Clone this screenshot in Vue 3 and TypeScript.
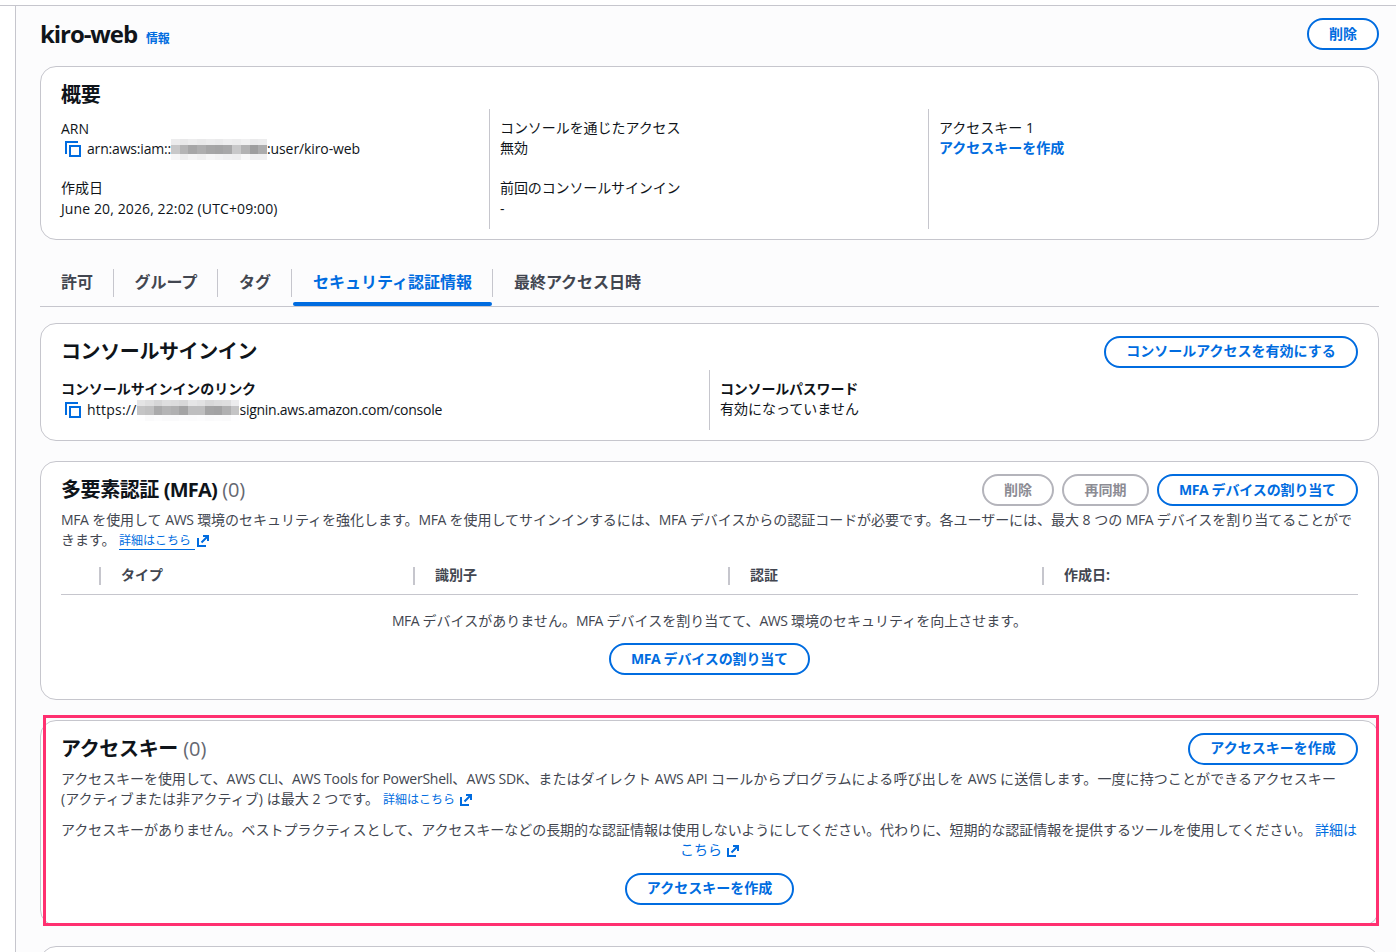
<script setup lang="ts">
import type { Directive } from 'vue'

interface Tab {
  label: string
  size: string
  active?: boolean
}

const tabs: Tab[] = [
  { label: '許可', size: 'w74' },
  { label: 'グループ', size: 'w104' },
  { label: 'タグ', size: 'w74' },
  { label: 'セキュリティ認証情報', size: 'w201', active: true },
  { label: '最終アクセス日時', size: 'w169' },
]

const columns: string[] = ['', 'タイプ', '識別子', '認証', '作成日:']

// Grey levels of the redaction blocks, one array per row.
const accountMask: number[][] = [
  [236, 232, 236, 233, 236, 234, 238, 236, 240, 234, 236],
  [200, 180, 166, 174, 166, 164, 168, 200, 178, 158, 172],
  [246, 238, 244, 240, 246, 243, 240, 238, 248, 240, 240],
]
const hostMask: number[][] = [
  [228, 222, 214, 222, 220, 216, 230, 226, 216, 220, 222, 236],
  [196, 192, 170, 180, 176, 164, 190, 190, 164, 162, 176, 196],
  [254, 250, 252, 250, 250, 252, 251, 252, 250, 251, 250, 254],
]

const grey = (v: number): string => `rgb(${v}, ${v}, ${v + 1})`

// Tracks a single line of text so that it spans the given width.
const vFit: Directive<HTMLElement, number> = {
  mounted(el, binding) {
    el.style.setProperty('--track', '0px')
    const natural = el.getBoundingClientRect().width
    const count = Array.from(el.textContent ?? '').length
    el.style.setProperty('--track', `${((binding.value - natural) / count).toFixed(4)}px`)
  },
}
</script>

<template>
  <div class="page">
    <div class="topbar"></div>
    <div class="body">
      <div class="rail"></div>
      <main class="main">
        <header class="page-head">
          <h1><span v-fit="97" class="fit">kiro-web</span></h1>
          <a class="info">情報</a>
          <button class="btn w72">削除</button>
        </header>

        <section class="card summary">
          <h2><span v-fit="39.5" class="fit">概要</span></h2>
          <div class="cols three">
            <div class="col">
              <div><span v-fit="28" class="fit">ARN</span></div>
              <div class="copyline">
                <svg class="copy" viewBox="0 0 16 16"><path d="M1 13V1H13" /><rect x="5" y="5" width="10" height="10" /></svg>
                <span v-fit="84" class="fit">arn:aws:iam::</span>
                <span class="mask acct">
                  <span v-for="(row, r) in accountMask" :key="r" class="mrow">
                    <i v-for="(v, c) in row" :key="c" :style="{ background: grey(v) }"></i>
                  </span>
                </span>
                <span v-fit="93" class="fit">:user/kiro-web</span>
              </div>
              <div class="gap"><div class="jp">作成日</div></div>
              <div><span v-fit="216.5" class="fit">June 20, 2026, 22:02 (UTC+09:00)</span></div>
            </div>
            <div class="col">
              <div class="jp"><span v-fit="180.5" class="fit">コンソールを通じたアクセス</span></div>
              <div class="jp">無効</div>
              <div class="gap"><div class="jp"><span v-fit="180.5" class="fit">前回のコンソールサインイン</span></div></div>
              <div>-</div>
            </div>
            <div class="col">
              <div class="jp">アクセスキー 1</div>
              <div class="jp"><a class="strong">アクセスキーを作成</a></div>
            </div>
          </div>
        </section>

        <nav class="tabs">
          <div v-for="t in tabs" :key="t.label" class="tab" :class="[t.size, { active: t.active }]">
            <span>{{ t.label }}</span>
          </div>
        </nav>

        <section class="card signin">
          <div class="card-head">
            <h2><span v-fit="196" class="fit">コンソールサインイン</span></h2>
            <button class="btn cjk w254">コンソールアクセスを有効にする</button>
          </div>
          <div class="cols two">
            <div class="col">
              <div class="strong jp"><span v-fit="195" class="fit">コンソールサインインのリンク</span></div>
              <div class="copyline">
                <svg class="copy" viewBox="0 0 16 16"><path d="M1 13V1H13" /><rect x="5" y="5" width="10" height="10" /></svg>
                <span v-fit="49.5" class="fit">https://</span>
                <span class="mask host">
                  <span v-for="(row, r) in hostMask" :key="r" class="mrow">
                    <i v-for="(v, c) in row" :key="c" :style="{ background: grey(v) }"></i>
                  </span>
                </span>
                <span v-fit="202.5" class="fit">signin.aws.amazon.com/console</span>
              </div>
            </div>
            <div class="col">
              <div class="strong jp"><span v-fit="138" class="fit">コンソールパスワード</span></div>
              <div class="jp">有効になっていません</div>
            </div>
          </div>
        </section>

        <section class="card mfa">
          <div class="card-head">
            <h2><span v-fit="156" class="fit">多要素認証 <b class="lat">(MFA)</b></span> <span v-fit="23" class="fit count">(0)</span></h2>
            <button class="btn off w72">削除</button>
            <button class="btn off w87">再同期</button>
            <button class="btn w201"><span v-fit="157" class="fit"><b class="lat">MFA</b> デバイスの割り当て</span></button>
          </div>
          <div class="desc">
            <div><span v-fit="1291" class="fit"><span class="lat">MFA</span> を使用して <span class="lat">AWS</span> 環境のセキュリティを強化します。<span class="lat">MFA</span> を使用してサインインするには、<span class="lat">MFA</span> デバイスからの認証コードが必要です。各ユーザーには、最大 8 つの <span class="lat">MFA</span> デバイスを割り当てることがで</span></div>
            <div class="linkline">
              <span class="lead58">きます。</span><a class="small under">詳細はこちら</a>
              <svg class="ext" viewBox="0 0 12 12"><path d="M1 3V11H9M6 1H11V6M11 1L4.5 7.5" /></svg>
            </div>
          </div>
          <div class="thead">
            <div v-for="(c, i) in columns" :key="i" class="th"><div class="jp">{{ c }}</div></div>
          </div>
          <div class="empty">
            <span v-fit="635" class="fit"><span class="tight">MFA</span> デバイスがありません。<span class="tight">MFA</span> デバイスを割り当てて、<span class="tight">AWS</span> 環境のセキュリティを向上させます。</span>
          </div>
          <button class="btn mid w201"><span v-fit="157" class="fit"><b class="lat">MFA</b> デバイスの割り当て</span></button>
        </section>

        <section class="card keys">
          <div class="card-head">
            <h2><span v-fit="117" class="fit">アクセスキー</span> <span v-fit="23" class="fit count">(0)</span></h2>
            <button class="btn cjk w170">アクセスキーを作成</button>
          </div>
          <div class="desc">
            <div><span v-fit="1275" class="fit"><span class="close">アクセスキーを使用して、</span><span class="lat">AWS CLI</span>、<span class="lat">AWS Tools for PowerShell</span>、<span class="lat">AWS SDK</span>、またはダイレクト <span class="lat">AWS API</span> コールからプログラムによる呼び出しを <span class="lat">AWS</span> に送信します。一度に持つことができるアクセスキー</span></div>
            <div class="linkline">
              <span class="lead322"><span v-fit="318" class="fit">(アクティブまたは非アクティブ) は最大 2 つです。</span></span><a class="small">詳細はこちら</a>
              <svg class="ext wide" viewBox="0 0 12 12"><path d="M1 3V11H9M6 1H11V6M11 1L4.5 7.5" /></svg>
            </div>
          </div>
          <div class="none">
            <div><span v-fit="1254" class="fit">アクセスキーがありません。ベストプラクティスとして、アクセスキーなどの長期的な認証情報は使用しないようにしてください。代わりに、短期的な認証情報を提供するツールを使用してください。 </span><a>詳細は</a></div>
            <div class="linkline center">
              <a>こちら</a>
              <svg class="ext wide" viewBox="0 0 12 12"><path d="M1 3V11H9M6 1H11V6M11 1L4.5 7.5" /></svg>
            </div>
          </div>
          <button class="btn cjk mid w169">アクセスキーを作成</button>
          <div class="highlight"></div>
        </section>

        <section class="card next"></section>
      </main>
    </div>
  </div>
</template>

<style>
html,
body {
  margin: 0;
  overflow: hidden;
  background: #fff;
}
</style>

<style scoped>
.page {
  width: 1396px;
  height: 952px;
  overflow: hidden;
  display: flex;
  flex-direction: column;
  font-family: 'Open Sans', 'Noto Sans CJK JP', sans-serif;
  font-size: 14px;
  line-height: 20px;
  color: #0f141a;
}
.page * {
  box-sizing: border-box;
}
.topbar {
  flex: none;
  height: 6px;
  border-bottom: 1px solid #c6c6cd;
}
.body {
  flex: 1;
  min-height: 0;
  display: flex;
}
.rail {
  flex: none;
  width: 16px;
  border-right: 1px solid #c6c6cd;
}
.main {
  flex: 1;
  background: #fcfcfd;
  padding: 12px 17px 0 24px;
  display: flex;
  flex-direction: column;
}
.fit {
  display: inline-block;
  white-space: pre;
  letter-spacing: var(--track);
}
.lat {
  font-weight: inherit;
  letter-spacing: calc(var(--track) - 0.35px);
}
.tight {
  letter-spacing: calc(var(--track) - 0.6px);
}
.close {
  letter-spacing: calc(var(--track) - 0.15px);
}
.jp {
  margin: -1px 0 1px;
}
.page-head {
  flex: none;
  height: 32px;
  display: flex;
  align-items: center;
  margin-bottom: 16px;
}
h1,
h2 {
  margin: 0;
  font-weight: 700;
}
h1 {
  font-size: 24px;
  line-height: 30px;
  width: 106px;
}
h2 {
  flex: 1;
  font-size: 20px;
  line-height: 24px;
  white-space: pre;
}
a {
  color: #006ce0;
}
.info {
  flex: 1;
  font-size: 12px;
  font-weight: 700;
  letter-spacing: -0.2px;
  padding-top: 10px;
}
.strong {
  font-weight: 700;
}
.btn {
  flex: none;
  height: 32px;
  padding: 0;
  border: 2px solid #006ce0;
  border-radius: 16px;
  background: #fff;
  color: #006ce0;
  font: inherit;
  font-weight: 700;
  white-space: nowrap;
}
.btn.off {
  border-color: #b4b4bb;
  color: #8c8c94;
  margin-right: 8px;
}
.btn.cjk {
  padding-bottom: 2px;
}
.btn.mid {
  display: block;
  margin: 0 auto;
}
.w72 { width: 72px; }
.w74 { width: 74px; }
.w87 { width: 87px; }
.w104 { width: 104px; }
.w169 { width: 169px; }
.w170 { width: 170px; }
.w201 { width: 201px; }
.w254 { width: 254px; }
.card {
  flex: none;
  border: 1px solid #c6c6cd;
  border-radius: 16px;
  background: #fff;
  padding: 12px 20px 0;
}
.summary {
  height: 174px;
  padding-top: 16px;
}
.cols {
  display: grid;
}
.three {
  grid-template-columns: 428px 439px 1fr;
  margin-top: 2px;
  height: 120px;
}
.two {
  grid-template-columns: 648px 1fr;
  margin-top: 2px;
  height: 60px;
}
.col {
  padding-top: 10px;
}
.col + .col {
  border-left: 1px solid #c6c6cd;
  padding-left: 10px;
}
.gap {
  padding-top: 20px;
}
.copyline {
  height: 20px;
  display: flex;
  align-items: center;
}
.copy {
  flex: none;
  width: 16px;
  height: 16px;
  margin: -1px 6px 0 4px;
  fill: none;
  stroke: #006ce0;
  stroke-width: 2;
}
.mask {
  flex: none;
  display: flex;
  flex-direction: column;
}
.acct { width: 96px; }
.host { width: 103px; }
.mrow {
  display: flex;
  height: 6px;
}
.mrow:nth-child(2) {
  height: 9px;
}
.mrow i {
  flex: 1;
}
.tabs {
  flex: none;
  display: flex;
  height: 51px;
  margin: 16px 0;
  border-bottom: 1px solid #c6c6cd;
}
.tab {
  height: 50px;
  display: flex;
  justify-content: center;
  padding-top: 14px;
  font-size: 16px;
  font-weight: 700;
  color: #424650;
  background: linear-gradient(#c6c6cd, #c6c6cd) right 13px / 1px 28px no-repeat;
}
.tab span {
  line-height: 24px;
}
.tab:last-child {
  background: none;
}
.tab.active {
  position: relative;
  color: #006ce0;
}
.tab.active::after {
  content: '';
  position: absolute;
  left: 1px;
  right: 1px;
  bottom: 0;
  height: 4px;
  border-radius: 2px;
  background: #006ce0;
}
.signin {
  height: 118px;
}
.card-head {
  display: flex;
  align-items: center;
  height: 32px;
}
.count {
  font-weight: 400;
  color: #656871;
}
.mfa {
  height: 239px;
  margin-top: 20px;
}
.desc {
  margin-top: 4px;
  color: #424650;
}
.linkline {
  height: 20px;
  display: flex;
  align-items: center;
}
.lead58 { width: 58px; }
.lead322 { width: 322px; }
.small {
  font-size: 12px;
  line-height: 17px;
}
.under {
  width: 76px;
  border-bottom: 1px solid #006ce0;
  line-height: 17px;
  padding-top: 2px;
}
.ext {
  flex: none;
  width: 12px;
  height: 12px;
  margin: 2px 0 0 2px;
  fill: none;
  stroke: #006ce0;
  stroke-width: 2;
}
.ext.wide {
  margin-left: 5px;
}
.thead {
  display: grid;
  grid-template-columns: 40px 314px 315px 314px 1fr;
  height: 37px;
  margin-top: 8px;
  padding-top: 8px;
  border-bottom: 1px solid #c6c6cd;
  color: #424650;
  font-weight: 700;
}
.th {
  padding-left: 20px;
  background: linear-gradient(#c6c6cd, #c6c6cd) right 1px / 2px 18px no-repeat;
}
.th:last-child {
  background: none;
}
.empty {
  margin: 16px 0 12px;
  text-align: center;
  color: #424650;
}
.keys {
  position: relative;
  height: 206px;
  margin-top: 20px;
}
.none {
  margin: 11px 0 13px;
  color: #424650;
  white-space: nowrap;
}
.center {
  justify-content: center;
}
.highlight {
  position: absolute;
  left: 2px;
  top: -6px;
  width: 1336px;
  height: 211px;
  border: 3px solid #ff3070;
}
.next {
  height: 60px;
  margin-top: 20px;
}
</style>
